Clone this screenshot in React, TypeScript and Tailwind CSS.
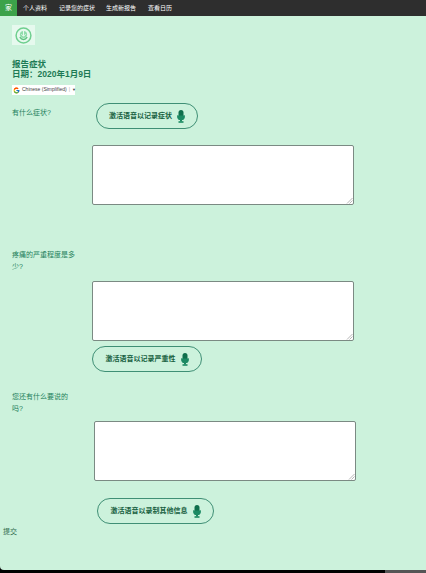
import { FcGoogle } from "react-icons/fc";

const font = "[font-family:'Liberation_Sans','Noto_Sans_CJK_SC',sans-serif]";

function VoiceButton({ label, className }: { label: string; className: string }) {
  return (
    <div
      className={`flex h-[26px] items-center justify-center gap-[5px] rounded-full border border-[#3f8f75] text-[7px] font-bold text-[#17603f] ${className}`}
    >
      <span>{label}</span>
      <svg width="8" height="13" viewBox="0 0 8 13">
        <rect x="1.5" y="0" width="5" height="8.5" rx="2.5" fill="#0f6f4c" />
        <path d="M0.5 5.5v1a3.5 3.5 0 0 0 7 0v-1" stroke="#1c8a63" strokeWidth="1" fill="#1c8a63" />
        <rect x="3" y="9.5" width="2" height="2" fill="#1c8a63" />
        <rect x="1.5" y="11.2" width="5" height="1.6" fill="#1c8a63" />
      </svg>
    </div>
  );
}

function Box({ className }: { className: string }) {
  return (
    <div className={`relative h-[60px] rounded-[2px] border border-[#7b8a83] bg-white ${className}`}>
      <svg className="absolute bottom-0 right-0" width="7" height="7" viewBox="0 0 7 7">
        <path d="M1 6.5 6.5 1M3.5 6.5l3-3" stroke="#999" strokeWidth="0.7" fill="none" />
      </svg>
    </div>
  );
}

export default function App() {
  return (
    <div className={`relative h-[573px] w-[426px] overflow-hidden bg-[#ccf2dc] ${font}`}>
      <nav className="flex h-[16px] items-center bg-[#2e2e2e] text-[6px] text-white">
        <span className="flex h-full w-[17px] items-center justify-center bg-[#3ca24a] text-[7px]">家</span>
        <span className="ml-[6px]">个人资料</span>
        <span className="ml-[12px]">记录您的症状</span>
        <span className="ml-[11px]">生成新报告</span>
        <span className="ml-[12px]">查看日历</span>
      </nav>

      <div className="ml-[12px] mt-[9px] flex h-[20px] w-[23px] items-center justify-center bg-[#e6f9ee]">
        <svg width="17" height="17" viewBox="0 0 17 17">
          <circle cx="8.5" cy="8.5" r="7.4" fill="none" stroke="#6fcf8f" strokeWidth="1.5" />
          <circle cx="8.5" cy="7.5" r="3.6" fill="#8fdcab" />
          <path d="M8.5 4v5M6.4 7.2l2.1 2.1 2.1-2.1" stroke="#e6f9ee" strokeWidth="1" fill="none" />
          <path d="M4.8 10.2c1 1.6 2.2 2.3 3.7 2.3s2.7-.7 3.7-2.3" stroke="#5cc27f" strokeWidth="1.3" fill="none" />
        </svg>
      </div>

      <h1 className="ml-[12px] mt-[15px] text-[8.5px] font-bold leading-[9.5px] text-[#1d7a55]">
        报告症状
        <br />
        日期：2020年1月9日
      </h1>

      <div className="ml-[12px] mt-[6px] flex h-[10px] w-[63px] items-center bg-white text-[5px] text-[#444]">
        <FcGoogle className="ml-[1px] shrink-0" size={7} />
        <span className="ml-[2px] whitespace-nowrap">Chinese (Simplified)</span>
        <span className="ml-[2px] text-[#aaa]">|</span>
        <span className="ml-[2px] text-[4px]">▼</span>
      </div>

      <div className="mt-[8px] flex h-[26px]">
        <p className="ml-[12px] mt-[4px] w-[84px] text-[7px] leading-[12px] text-[#23805b]">有什么症状?</p>
        <VoiceButton label="激活语音以记录症状" className="w-[102px]" />
      </div>

      <Box className="ml-[92px] mt-[16px] w-[262px]" />

      <p className="ml-[12px] mt-[44px] w-[65px] text-[7px] leading-[12px] text-[#23805b]">疼痛的严重程度是多少?</p>
      <Box className="ml-[92px] mt-[8px] w-[262px]" />
      <VoiceButton label="激活语音以记录严重性" className="ml-[92px] mt-[5px] w-[110px]" />

      <p className="ml-[12px] mt-[19px] w-[65px] text-[7px] leading-[12px] text-[#23805b]">您还有什么要说的吗?</p>
      <Box className="ml-[94px] mt-[6px] w-[262px]" />
      <VoiceButton label="激活语音以录制其他信息" className="ml-[97px] mt-[17px] w-[117px]" />

      <p className="ml-[3px] mt-[3px] text-[7px] leading-[10px] text-[#2f6b4c]">提交</p>

      <div className="absolute bottom-0 left-0 flex h-[3px] w-full">
        <span className="w-[385px] bg-black" />
        <span className="flex-1 bg-[#555]" />
      </div>
      <span className="absolute bottom-[3px] left-0 h-[4px] w-[4px] bg-black">
        <span className="block h-full w-full rounded-bl-[4px] bg-[#ccf2dc]" />
      </span>
    </div>
  );
}
